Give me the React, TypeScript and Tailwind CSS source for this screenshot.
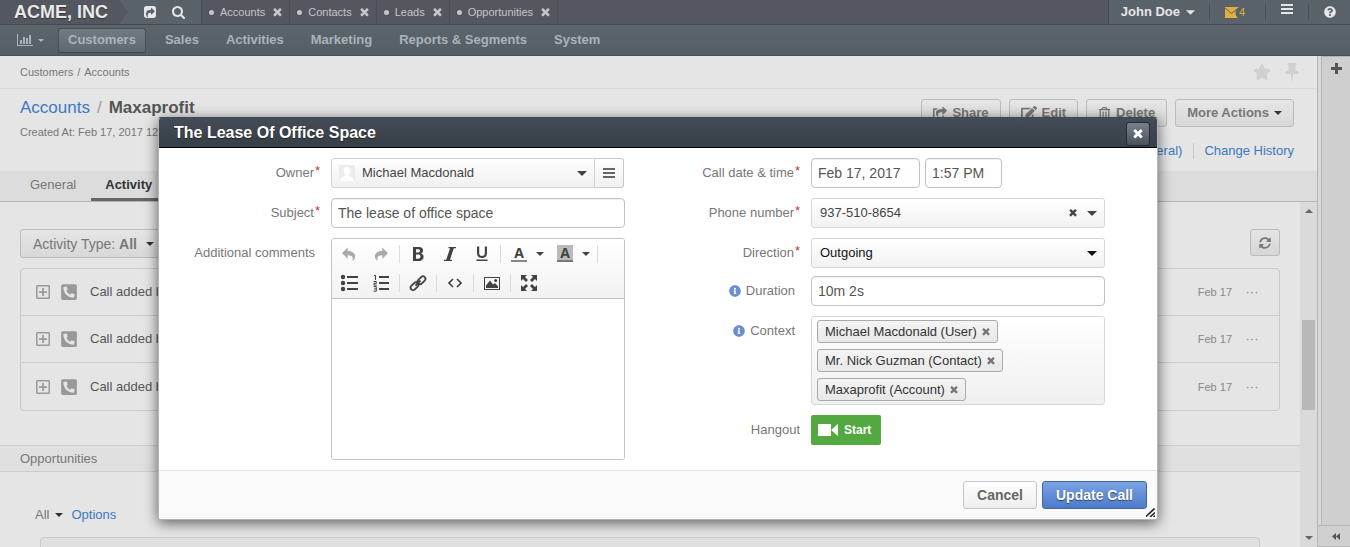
import React from 'react';
import {
  FaShareSquare,
  FaEdit,
  FaRegTrashAlt,
  FaStar,
  FaPhoneSquareAlt,
  FaSyncAlt,
  FaInfoCircle,
  FaQuestionCircle,
  FaRegPlusSquare,
} from 'react-icons/fa';

type IconProps = { className?: string };

function Close({ className }: IconProps) {
  return (
    <svg viewBox="240 340 1312 1312" className={className} fill="currentColor" aria-hidden="true">
      <path d="M1490 1322q0 40-28 68l-136 136q-28 28-68 28t-68-28l-294-294-294 294q-28 28-68 28t-68-28l-136-136q-28-28-28-68t28-68l294-294-294-294q-28-28-28-68t28-68l136-136q28-28 68-28t68 28l294 294 294-294q28-28 68-28t68 28l136 136q28 28 28 68t-28 68l-294 294 294 294q28 28 28 68z" />
    </svg>
  );
}

function Caret({ className }: IconProps) {
  return (
    <svg viewBox="0 0 10 5" className={className} fill="currentColor" aria-hidden="true">
      <path d="M0 0h10L5 5z" />
    </svg>
  );
}

function Bars({ className }: IconProps) {
  return (
    <svg viewBox="0 0 12 10" className={className} fill="currentColor" shapeRendering="crispEdges" aria-hidden="true">
      <path d="M0 0h12v2H0zM0 4h12v2H0zM0 8h12v2H0z" />
    </svg>
  );
}

function ShareSquare({ className }: IconProps) {
  return (
    <svg viewBox="128 0 1536 1536" className={className} fill="currentColor" fillRule="evenodd" aria-hidden="true">
      <path d="M1133 1069l352-352q19-19 19-45t-19-45l-352-352q-30-31-69-14-40 17-40 59v160q-119 0-216 19.500t-162.500 51-114 79-76.500 95.500-44.500 109-21.500 111.500-5 110.500q0 181 167 404 11 12 25 12 7 0 13-3 22-9 19-33-44-354 62-473 46-52 130-75.500t224-23.500v160q0 42 40 59 12 5 24 5 26 0 45-19zm531-781v960q0 119-84.500 203.500t-203.500 84.500h-960q-119 0-203.500-84.500t-84.500-203.500v-960q0-119 84.500-203.500t203.500-84.500h960q119 0 203.500 84.500t84.500 203.500z" />
    </svg>
  );
}

function Search({ className }: IconProps) {
  return (
    <svg viewBox="64 128 1664 1664" className={className} fill="currentColor" aria-hidden="true">
      <path d="M1216 832q0-185-131.500-316.500t-316.500-131.500-316.500 131.500-131.500 316.500 131.500 316.500 316.500 131.500 316.500-131.500 131.500-316.500zm512 832q0 52-38 90t-90 38q-54 0-90-38l-343-342q-179 124-399 124-143 0-273.500-55.500t-225-150-150-225-55.500-273.500 55.500-273.500 150-225 225-150 273.500-55.500 273.500 55.500 225 150 150 225 55.500 273.500q0 220-124 399l343 343q37 37 37 90z" />
    </svg>
  );
}

function Chart() {
  return (
    <svg viewBox="0 0 16 12" className="h-3 w-4" fill="currentColor" shapeRendering="crispEdges" aria-hidden="true">
      <path d="M0 0h1v11h15v1H0zM3 6h2v4H3zM6 3h2v7H6zM9 4h2v6H9zM12 1h2v9h-2z" />
    </svg>
  );
}

function Mail() {
  return (
    <svg viewBox="0 0 14 12" className="h-3 w-3.5" fill="currentColor" aria-hidden="true">
      <path d="M0 1h14c-2 1-3.500 3-3.500 5.500 0 2 .8 4 2.500 5.500H0z" />
      <path d="M0 2l6.500 5.500L12 3" fill="none" stroke="#596269" strokeWidth="1" />
    </svg>
  );
}

function Pin() {
  return (
    <svg viewBox="0 0 14 18" className="h-[18px] w-3.5" fill="currentColor" aria-hidden="true">
      <path d="M2.500 0h9v2h-1v5c2 .7 3 2 3 4H8l-.6 7h-.8L6 11H.5c0-2 1-3.300 3-4V2h-1z" />
    </svg>
  );
}

function Camera() {
  return (
    <svg viewBox="0 0 20 12" className="h-3 w-5" fill="currentColor" aria-hidden="true">
      <path d="M0 0h13v12H0zM13 6l7-6v12z" />
    </svg>
  );
}

function Resizer() {
  return (
    <svg viewBox="0 0 9 9" className="size-[9px]" fill="none" stroke="#222" strokeWidth="1.600" aria-hidden="true">
      <path d="M0 8.500L8.500.5M4 9l5-4.500M7.500 9L9 7.700" />
    </svg>
  );
}

function Avatar() {
  return (
    <svg viewBox="0 0 16 16" className="size-4" aria-hidden="true">
      <path d="M0 0h16v16H0z" fill="#ececec" />
      <path d="M8 2c2 0 3.400 1.500 3.400 3.700 0 1.800-.7 3.200-1.700 4v1.200c2.500.7 4.800 1.400 5.300 5.100H1c.5-3.700 2.800-4.400 5.300-5.100V9.700c-1-.8-1.700-2.200-1.700-4C4.600 3.500 6 2 8 2z" fill="#fff" />
    </svg>
  );
}

function Undo({ className }: IconProps) {
  return (
    <svg viewBox="0 0 16 16" className={className} fill="currentColor" aria-hidden="true">
      <path d="M6.500.5v4c5 0 8.500 2.500 8.500 6 0 2.300-1.300 4.200-3.500 5.300 1.800-3.800.3-6.300-5-6.300v4L0 7z" />
    </svg>
  );
}

function ToolIcon({ children }: { children: React.ReactNode }) {
  return (
    <svg viewBox="0 0 18 18" className="size-[18px]" fill="currentColor" aria-hidden="true">
      {children}
    </svg>
  );
}

function ToolButton({ label, children, wide }: { label: string; children: React.ReactNode; wide?: boolean }) {
  return (
    <button
      type="button"
      aria-label={label}
      className={
        wide
          ? 'flex h-[28px] w-[46px] shrink-0 items-center justify-between pr-[5px] pl-2'
          : 'flex h-[28px] w-8 shrink-0 items-center justify-center'
      }
    >
      {children}
    </button>
  );
}

function Sep() {
  return <span className="mx-[2px] h-[18px] w-px shrink-0 bg-[#dcdcdc]" />;
}

function Letter({ filled }: { filled?: boolean }) {
  return (
    <span
      className={
        filled
          ? 'w-4 border-b-2 border-[#777] bg-[#bbb] text-center font-["Open_Sans",sans-serif] text-sm leading-[15px] font-bold'
          : 'w-4 border-b-2 border-[#888] text-center font-["Open_Sans",sans-serif] text-sm leading-[15px] font-bold'
      }
    >
      A
    </span>
  );
}

function Editor() {
  return (
    <div className="h-[222px] overflow-hidden rounded-[3px] border border-[#c4c4c4] bg-white">
      <div className="border-b border-[#c4c4c4] bg-linear-to-b from-white to-[#f2f2f2] px-px pb-px text-[#424242]">
        <div className="flex h-[29px] items-center">
          <ToolButton label="Undo"><Undo className="size-3.5 text-[#aaa]" /></ToolButton>
          <ToolButton label="Redo"><Undo className="size-3.5 -scale-x-100 text-[#aaa]" /></ToolButton>
          <Sep />
          <ToolButton label="Bold">
            <ToolIcon><path fillRule="evenodd" d="M4 2h6c2.600 0 4 1.300 4 3.400 0 1.500-.8 2.600-2 3 1.500.4 2.600 1.600 2.600 3.400 0 2.700-1.800 4.200-4.600 4.200H4zm3 2.200v3.300h2.200c1.200 0 1.800-.6 1.800-1.700s-.6-1.600-1.800-1.600zm0 5.400v4.100h2.400c1.400 0 2.100-.8 2.100-2.100s-.7-2-2.100-2z" /></ToolIcon>
          </ToolButton>
          <ToolButton label="Italic">
            <ToolIcon><path d="M7.500 2H15v1.300h-2.200L8.900 14.700H11V16H3v-1.300h2.200L9.100 3.300H7.500z" /></ToolIcon>
          </ToolButton>
          <ToolButton label="Underline">
            <ToolIcon><path d="M4 1.500h2.200v6.500c0 2 .9 3 2.800 3s2.800-1 2.800-3V1.500H14V8c0 3.200-1.800 4.900-5 4.900S4 11.200 4 8zM3.500 14.500h11V16h-11z" /></ToolIcon>
          </ToolButton>
          <Sep />
          <ToolButton label="Text color" wide><Letter /><Caret className="h-1 w-2" /></ToolButton>
          <ToolButton label="Background color" wide><Letter filled /><Caret className="h-1 w-2" /></ToolButton>
          <Sep />
        </div>
        <div className="flex h-[29px] items-center">
          <ToolButton label="Bullet list">
            <ToolIcon><path d="M7 2h11v2H7zM7 8h11v2H7zM7 14h11v2H7z" /><circle cx="3" cy="3" r="2.200" /><circle cx="3" cy="9" r="2.200" /><circle cx="3" cy="15" r="2.200" /></ToolIcon>
          </ToolButton>
          <ToolButton label="Numbered list">
            <ToolIcon><path d="M7 2h10v2H7zM7 8h10v2H7zM7 14h10v2H7z" /><path d="M2 1.500h1.500V6M1.500 7.500h2.800v1.800H2v1.800h2.800M1.500 12.600h2.800v4.600H1.500M2 14.900h2.300" fill="none" stroke="currentColor" /></ToolIcon>
          </ToolButton>
          <Sep />
          <ToolButton label="Link">
            <ToolIcon><g fill="none" stroke="currentColor" strokeWidth="1.800"><rect x="8" y="3.700" width="9" height="5" rx="2.500" transform="rotate(-45 12.500 6.200)" /><rect x="1" y="9.700" width="9" height="5" rx="2.500" transform="rotate(-45 5.500 12.200)" /><path d="M6.500 11.500l5-5" /></g></ToolIcon>
          </ToolButton>
          <Sep />
          <ToolButton label="Source code">
            <ToolIcon><path d="M7 5L3 9l4 4M11 5l4 4-4 4" fill="none" stroke="currentColor" strokeWidth="1.700" /></ToolIcon>
          </ToolButton>
          <Sep />
          <ToolButton label="Insert image">
            <ToolIcon><path fillRule="evenodd" d="M1 3h16v13H1zm1 1v11h14V4z" /><path d="M3 14V11.500L7 6.500l3 4 2-1.500 3 3.500V14z" /><circle cx="12.700" cy="6.500" r="1.500" /></ToolIcon>
          </ToolButton>
          <Sep />
          <ToolButton label="Full screen">
            <ToolIcon><path d="M1 1h6L5 3l3 3-2 2-3-3-2 2zM17 1v6l-2-2-3 3-2-2 3-3-2-2zM1 17v-6l2 2 3-3 2 2-3 3 2 2zM17 17h-6l2-2-3-3 2-2 3 3 2-2z" /></ToolIcon>
          </ToolButton>
        </div>
      </div>
      <textarea id="comments" className="block h-[160px] w-full resize-none bg-white p-2 text-sm outline-none" />
    </div>
  );
}

function Row({ label, htmlFor, required, info, flush, children }: {
  label: string;
  htmlFor: string;
  required?: boolean;
  info?: boolean;
  flush?: boolean;
  children: React.ReactNode;
}) {
  return (
    <div className="flex items-start gap-2.5">
      <label
        htmlFor={htmlFor}
        className={
          required || flush
            ? 'flex h-[30px] w-[142px] shrink-0 items-center justify-end pr-px text-[#777]'
            : 'flex h-[30px] w-[142px] shrink-0 items-center justify-end pr-1.5 text-[#777]'
        }
      >
        {info && <FaInfoCircle className="mr-[5px] size-3 text-[#6a8fd0]" />}
        {label}
        {required && <span className="ml-px w-[5px] self-start pt-[5px] text-[#c83232]">*</span>}
      </label>
      <div className="min-w-0 flex-1">{children}</div>
    </div>
  );
}

const inputClass =
  'h-[30px] rounded border border-[#c2c2c2] bg-white px-1.5 text-sm text-[#555] shadow-[inset_0_1px_1px_rgba(0,0,0,0.06)] outline-none';
const selectClass =
  'h-[30px] w-full appearance-none rounded-[3px] border border-[#d6d6d6] bg-linear-to-b from-white to-[#f2f2f2] px-2 outline-none';

function Tag({ text }: { text: string }) {
  return (
    <li className="flex h-[23px] items-center gap-[5px] rounded-[3px] border border-[#aaa] bg-linear-to-b from-[#f4f4f4] to-[#e8e8e8] px-[7px] text-[#333]">
      {text}
      <button type="button" aria-label={'Remove ' + text} className="text-[#777]">
        <Close className="size-2" />
      </button>
    </li>
  );
}

function Dialog() {
  return (
    <section
      role="dialog"
      aria-labelledby="dialog-title"
      className="w-full max-w-[1000px] self-start overflow-hidden rounded-[3px] border border-[#b5b5b5] border-t-[#414954] bg-white shadow-[0_3px_14px_rgba(0,0,0,0.6)]"
    >
      <header className="flex h-[30px] items-center justify-between border-b border-black bg-linear-to-b from-[#444d57] to-[#363e46] pr-[7px] pl-[15px]">
        <h2 id="dialog-title" className="text-base font-bold text-white [text-shadow:0_1px_1px_#222]">
          The Lease Of Office Space
        </h2>
        <button type="button" aria-label="Close" className="mt-[3px] flex size-6 items-center justify-center rounded-[3px] border border-[#252b33] bg-linear-to-b from-[#77818c] to-[#4a535d] text-white">
          <Close className="size-2.5" />
        </button>
      </header>
      <div className="grid grid-cols-2 gap-x-[34px] pt-2.5 pr-[52px] pb-2.5 pl-5">
        <div className="flex flex-col gap-2.5">
          <Row label="Owner" htmlFor="owner" required>
            <div className="flex pr-px">
              <div className="relative flex-1">
                <select id="owner" className="h-[30px] w-full appearance-none rounded-l-[3px] border border-[#d0d0d0] bg-linear-to-b from-white to-[#f0f0f0] pr-6 pl-[30px] text-[#444] outline-none">
                  <option>Michael Macdonald</option>
                </select>
                <span className="pointer-events-none absolute inset-y-0 left-2 flex items-center"><Avatar /></span>
                <span className="pointer-events-none absolute inset-y-0 right-2 flex items-center text-[#444]"><Caret className="h-[5px] w-2.5" /></span>
              </div>
              <button type="button" aria-label="Choose owner" className="flex w-[29px] items-center justify-center rounded-r-[3px] border border-l-0 border-[#c8c8c8] bg-linear-to-b from-white to-[#f0f0f0] text-[#666]">
                <Bars className="h-2.5 w-3" />
              </button>
            </div>
          </Row>
          <Row label="Subject" htmlFor="subject" required>
            <input id="subject" defaultValue="The lease of office space" className={inputClass + ' w-full'} />
          </Row>
          <Row label="Additional comments" htmlFor="comments">
            <Editor />
          </Row>
        </div>
        <div className="flex flex-col gap-2.5">
          <Row label="Call date & time" htmlFor="call-date" required>
            <div className="flex gap-[5px]">
              <input id="call-date" defaultValue="Feb 17, 2017" className={inputClass + ' w-[109px]'} />
              <input aria-label="Call time" defaultValue="1:57 PM" className={inputClass + ' w-[77px]'} />
            </div>
          </Row>
          <Row label="Phone number" htmlFor="phone" required>
            <div className="relative">
              <select id="phone" className={selectClass + ' text-[#444]'}>
                <option>937-510-8654</option>
              </select>
              <div className="pointer-events-none absolute inset-y-0 right-2 flex items-center gap-2.5 text-[#444]">
                <Close className="size-2" />
                <Caret className="h-[5px] w-2.5" />
              </div>
            </div>
          </Row>
          <Row label="Direction" htmlFor="direction" required>
            <div className="relative">
              <select id="direction" className={selectClass + ' text-[#111]'}>
                <option>Outgoing</option>
              </select>
              <span className="pointer-events-none absolute inset-y-0 right-2 flex items-center text-[#111]"><Caret className="h-[5px] w-2.5" /></span>
            </div>
          </Row>
          <div className="-mt-0.5">
            <Row label="Duration" htmlFor="duration" info>
              <input id="duration" defaultValue="10m 2s" className={inputClass + ' w-full'} />
            </Row>
          </div>
          <Row label="Context" htmlFor="context" info>
            <ul id="context" className="flex h-[89px] flex-col items-start gap-1.5 rounded-[3px] border border-[#d6d6d6] bg-linear-to-b from-white to-[#f0f0f0] px-[5px] py-[3px]">
              <Tag text="Michael Macdonald (User)" />
              <Tag text="Mr. Nick Guzman (Contact)" />
              <Tag text="Maxaprofit (Account)" />
            </ul>
          </Row>
          <Row label="Hangout" htmlFor="hangout" flush>
            <button id="hangout" type="button" className="flex h-[30px] w-[70px] items-center gap-1.5 rounded-[2px] bg-[#53a93f] pl-[7px] text-xs font-bold text-white">
              <Camera />
              Start
            </button>
          </Row>
        </div>
      </div>
      <footer className="flex h-[49px] items-center justify-end gap-[5px] border-t border-[#e2e2e2] bg-[#fafafa] pr-2.5">
        <button type="button" className="h-7 rounded-[3px] border border-[#c4c4c4] bg-linear-to-b from-white to-[#eee] px-[13px] text-sm font-bold text-[#666]">
          Cancel
        </button>
        <button type="button" className="h-7 rounded-[3px] border border-[#42679f] bg-linear-to-b from-[#7ba3e4] to-[#4c7bca] px-[13px] text-sm font-bold text-white [text-shadow:0_1px_1px_#345]">
          Update Call
        </button>
      </footer>
      <span className="pointer-events-none absolute right-[3px] bottom-[3px]"><Resizer /></span>
    </section>
  );
}

function ActionButton({ icon, text, caret }: { icon?: React.ReactNode; text: string; caret?: boolean }) {
  return (
    <button type="button" className="flex h-7 items-center gap-[5px] rounded-[3px] border border-[#bbb] bg-linear-to-b from-[#e6e6e6] to-[#d8d8d8] px-[11px] font-bold text-[#777]">
      {icon}
      {text}
      {caret && <Caret className="h-1 w-2 text-[#333]" />}
    </button>
  );
}

const tabs = ['Accounts', 'Contacts', 'Leads', 'Opportunities'];
const menu = ['Sales', 'Activities', 'Marketing', 'Reports & Segments', 'System'];

function TopBar() {
  return (
    <div className="shrink-0">
      <div className="flex h-[25px] items-stretch border-b border-[#454a50] bg-[#54575f] text-[#ddd]">
        <div className="flex w-[202px] border-r border-[#4a4d54] bg-[#596269]">
          <a href="#" className="flex items-center bg-[#54575f] pl-3.5 text-lg leading-none font-bold text-[#eaeaea] [text-shadow:0_1px_1px_#333]">ACME, INC</a>
          <svg viewBox="0 0 20 24" preserveAspectRatio="none" className="h-6 w-5" aria-hidden="true"><path d="M0 0h11l9 12-9 12H0z" fill="#54575f" /></svg>
          <div className="flex flex-1 items-center justify-center gap-4 text-[#e6e6e6]">
            <button type="button" aria-label="Share page"><ShareSquare className="size-3" /></button>
            <button type="button" aria-label="Search"><Search className="size-[13px]" /></button>
          </div>
        </div>
        <ul className="flex flex-1 text-[11px] text-[#c4c6c9]">
          {tabs.map((t) => (
            <li key={t} className="flex items-center border-r border-[#4b4e55] px-[7px]">
              <span className="mr-[6px] size-[5px] rounded-full bg-[#c4c6c9]" />
              <a href="#">{t}</a>
              <button type="button" aria-label={'Close ' + t} className="ml-[8px]"><Close className="size-[9px]" /></button>
            </li>
          ))}
        </ul>
        <div className="flex items-center border-l border-[#474b52] bg-[#596269]">
          <button type="button" className="flex items-center gap-1.5 pr-3.5 pl-3 text-[13px] font-bold text-[#e6e6e6]">John Doe <Caret className="h-[5px] w-[9px]" /></button>
          <button type="button" aria-label="Mail" className="flex h-4 w-[56px] items-center border-l border-[#484e55] pl-[15px] text-[11px] text-[#dfb03f]"><Mail />4</button>
          <button type="button" aria-label="Menu" className="flex h-4 w-[43px] items-start justify-center border-l border-[#484e55] text-[#e6e6e6]"><Bars className="h-2.5 w-3" /></button>
          <button type="button" aria-label="Help" className="flex h-4 w-[42px] items-center justify-center border-l border-[#484e55] text-[#e6e6e6]"><FaQuestionCircle className="size-3" /></button>
        </div>
      </div>
      <nav className="flex h-[31px] items-center border-b border-[#4b5157] bg-linear-to-b from-[#5c656c] to-[#565e65] pl-[17px] font-bold text-[#a8b4ba]">
        <button type="button" aria-label="Dashboards" className="mr-[14px] flex items-center gap-[5px]"><Chart /><Caret className="h-[3px] w-1.5" /></button>
        <a href="#" className="mr-[19px] flex h-[25px] items-center rounded-[3px] border border-[#484e55] border-b-[#3d4247] bg-linear-to-b from-[#717a82] to-[#606970] px-[9px]">Customers</a>
        <div className="flex gap-[27px]">
          {menu.map((m) => (
            <a key={m} href="#">{m}</a>
          ))}
        </div>
      </nav>
    </div>
  );
}

export default function App() {
  return (
    <div className='relative flex h-screen flex-col overflow-hidden bg-[#e5e5e5] font-["Liberation_Sans",Arial,sans-serif] text-[13px] leading-4 text-[#777]'>
      <TopBar />
      <div className="flex min-h-0 flex-1">
        <main className="flex min-w-0 flex-1 flex-col">
          <div className="flex h-[33px] shrink-0 items-center justify-between border-b border-[#d9d9d9] pr-[18px] pl-5 text-[11px]">
            <p className="flex gap-1"><a href="#">Customers</a><span>/</span><a href="#">Accounts</a></p>
            <div className="flex items-center gap-3.5 text-[#d0d0d0]">
              <button type="button" aria-label="Favorite"><FaStar className="size-[18px]" /></button>
              <button type="button" aria-label="Pin"><Pin /></button>
            </div>
          </div>
          <div className="flex h-[82px] shrink-0 justify-between pr-[23px] pl-5">
            <div className="pt-2">
              <h1 className="flex gap-[7px] text-[17px] leading-[22px]"><a href="#" className="text-[#3c78c3]">Accounts</a><span className="text-[#999]">/</span><b className="text-[#555]">Maxaprofit</b></h1>
              <p className="mt-[5px] text-[11px]">Created At: Feb 17, 2017 12</p>
            </div>
            <div className="flex flex-col items-end gap-4 pt-2.5">
              <div className="flex gap-2">
                <ActionButton icon={<FaShareSquare className="size-3.5" />} text="Share" />
                <ActionButton icon={<FaEdit className="size-4" />} text="Edit" />
                <ActionButton icon={<FaRegTrashAlt className="size-[13px]" />} text="Delete" />
                <ActionButton text="More Actions" caret />
              </div>
              <p className="flex text-[#3c78c3]">
                <a href="#">Owner: Michael Macdonald (General)</a>
                <a href="#" className="ml-[11px] border-l border-[#ccc] pl-2.5">Change History</a>
              </p>
            </div>
          </div>
          <div className="flex h-[31px] shrink-0 border-b border-[#b5b5b5] bg-[#dcdcdc]">
            <a href="#" className="py-1.5 pr-[15px] pl-[30px]">General</a>
            <a href="#" className="border-b-[3px] border-[#666] px-3.5 py-1.5 font-bold text-[#333]">Activity</a>
          </div>
          <div className="flex min-h-0 flex-1">
            <div className="min-w-0 flex-1 overflow-hidden pt-[27px]">
              <div className="mr-5 mb-[9px] ml-5 flex h-[30px] items-start justify-between">
                <button type="button" className="flex h-[29px] items-center rounded-[3px] border border-[#bbb] bg-linear-to-b from-[#e6e6e6] to-[#d8d8d8] px-3 text-sm whitespace-pre">Activity Type: <b>All</b><Caret className="ml-[9px] h-1 w-2 text-[#333]" /></button>
                <button type="button" aria-label="Refresh" className="flex h-[27px] w-[30px] items-center justify-center rounded-[3px] border border-[#bbb] bg-linear-to-b from-[#e4e4e4] to-[#d6d6d6]"><FaSyncAlt className="size-3" /></button>
              </div>
              <ul className="mr-5 ml-5 rounded border border-[#cacaca]">
                {[1, 2, 3].map((n) => (
                  <li key={n} className="flex h-[47px] items-center border-b border-[#cacaca] pr-5 pl-3.5 text-[#555] last:border-b-0">
                    <button type="button" aria-label="Expand" className="mr-[9px] text-[#999]"><FaRegPlusSquare className="size-4" /></button>
                    <FaPhoneSquareAlt className="mr-3 size-[18px] text-[#999]" />
                    Call added by John Doe
                    <time className="mr-[13px] ml-auto text-[11px] text-[#888]">Feb 17</time>
                    <button type="button" aria-label="More" className="w-3.5 text-center text-[#888]">···</button>
                  </li>
                ))}
              </ul>
              <h3 className="mt-[34px] flex h-[27px] items-center border-y border-[#cdcdcd] bg-[#e0e0e0] pl-5">Opportunities</h3>
              <div className="mt-[35px] flex items-center pl-[35px]">
                <button type="button" className="flex items-center gap-1.5">All <Caret className="h-1 w-2 text-[#333]" /></button>
                <a href="#" className="ml-2 text-[#3c78c3]">Options</a>
              </div>
              <div className="mt-[14px] mr-10 ml-10 h-10 rounded border border-[#cacaca] bg-[#e0e0e0]" />
            </div>
            <div className="flex w-[17px] flex-col items-center bg-[#dadada] pt-[7px] pb-[7px] text-[#666]">
              <Caret className="h-1 w-2 rotate-180" />
              <div className="mt-[107px] h-[90px] w-[13px] bg-[#b8b8b8]" />
              <Caret className="mt-auto h-1 w-2" />
            </div>
          </div>
        </main>
        <aside className="flex w-[33px] shrink-0 flex-col border-l border-[#b5b5b5] bg-[#d8d8d8] text-[#555]">
          <div className="ml-[3px] flex flex-1 justify-center border-t border-l border-[#b5b5b5] bg-[#cfcfcf] pt-1.5">
            <button type="button" aria-label="Add widget" className="size-[11px]">
              <svg viewBox="0 0 11 11" className="size-[11px]" fill="currentColor" aria-hidden="true"><path d="M4 0h3v4h4v3H7v4H4V7H0V4h4z" /></svg>
            </button>
          </div>
          <button type="button" aria-label="Expand sidebar" className="flex h-[22px] items-center justify-center border-y border-[#b5b5b5] bg-[#d0d0d0] pl-1">
            <svg viewBox="0 0 8 7" className="h-[7px] w-2" fill="currentColor" aria-hidden="true"><path d="M4 0v7L0 3.500zM8 0v7L4 3.500z" /></svg>
          </button>
        </aside>
      </div>
      <div className="absolute inset-x-0 top-[117px] flex justify-center pr-[34px]">
        <div className="relative w-full max-w-[1000px]">
          <Dialog />
        </div>
      </div>
    </div>
  );
}
